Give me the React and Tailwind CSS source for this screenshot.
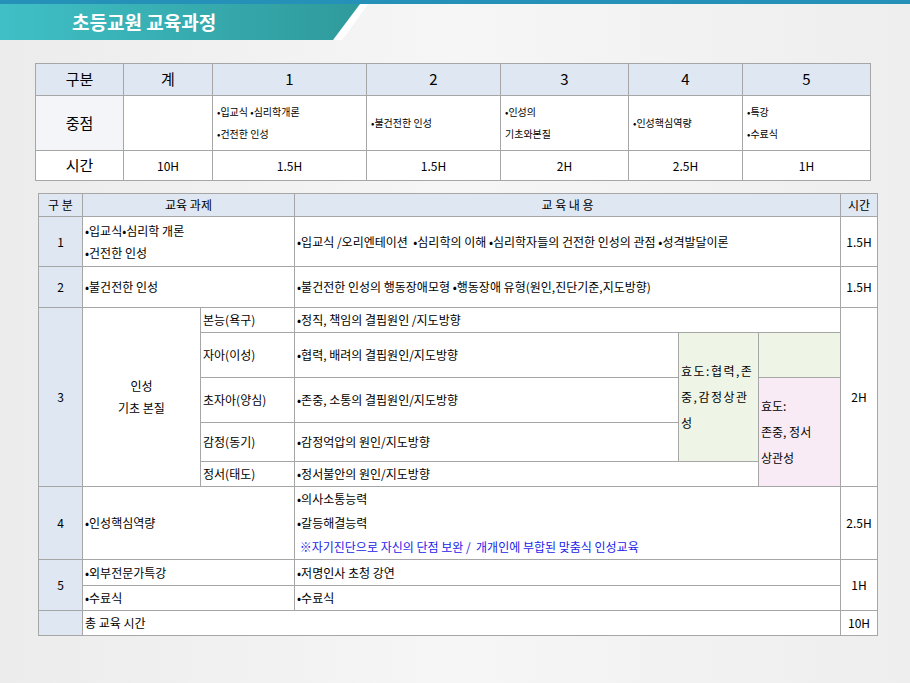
export default function App() {
  const f = { fontFamily: '"Noto Sans CJK KR", "Liberation Sans", sans-serif' };
  const b = "border border-[#a6a6a6]";
  const c = `${b} px-[2px] align-middle`;
  const blue = "bg-[#dfe7f3]";
  return (
    <div className="w-[910px] h-[683px] bg-gradient-to-r from-[#ececec] via-[#f6f6f6] to-[#eeeeee] relative overflow-hidden" style={f}>
      <div className="h-[4px] bg-[#2590b8]" />
      <div className="flex h-[36px]">
        <div className="w-[368px] h-[36px] bg-white [clip-path:polygon(0_0,100%_0,93%_100%,0_100%)] flex">
          <div className="w-[360px] h-[36px] bg-gradient-to-r from-[#3fc0c6] to-[#2f9a9c] [clip-path:polygon(0_0,100%_0,92.5%_100%,0_100%)] flex items-center pl-[72px] text-white text-[19px] font-bold">
            초등교원 교육과정
          </div>
        </div>
      </div>
      <div className="px-[35px] pt-[23px]">
        <table className="w-[835px] border-collapse text-black table-fixed bg-white font-normal">
          <colgroup>
            <col className="w-[88px]" /><col className="w-[89px]" /><col className="w-[154px]" /><col className="w-[134px]" /><col className="w-[128px]" /><col className="w-[114px]" /><col className="w-[128px]" />
          </colgroup>
          <tbody>
            <tr className={`h-[32px] ${blue} text-[15px] text-center`}>
              {["구분", "계", "1", "2", "3", "4", "5"].map((t) => <td key={t} className={b}>{t}</td>)}
            </tr>
            <tr className="h-[55px] text-[10px] leading-[22px]">
              <td className={`${b} text-center text-[15px] bg-[#f3f5f8]`}>중점</td>
              <td className={b}></td>
              <td className={`${c} px-[4px]`}>•입교식 •심리학개론<br />•건전한 인성</td>
              <td className={`${c} px-[4px]`}>•불건전한 인성</td>
              <td className={`${c} px-[4px]`}>•인성의<br />기초와본질</td>
              <td className={`${c} px-[4px]`}>•인성핵심역량</td>
              <td className={`${c} px-[4px]`}>•특강<br />•수료식</td>
            </tr>
            <tr className="h-[30px] text-[12px] text-center">
              <td className={`${b} text-[15px]`}>시간</td>
              {["10H", "1.5H", "1.5H", "2H", "2.5H", "1H"].map((t, i) => <td key={i} className={b}>{t}</td>)}
            </tr>
          </tbody>
        </table>
      </div>
      <div className="pl-[38px] pt-[12px]">
        <table className="w-[839px] border-collapse table-fixed text-[12px] bg-white text-black">
          <colgroup>
            <col className="w-[44px]" /><col className="w-[118px]" /><col className="w-[94px]" /><col className="w-[384px]" /><col className="w-[80px]" /><col className="w-[82px]" /><col className="w-[37px]" />
          </colgroup>
          <tbody>
            <tr className={`h-[23px] ${blue} text-center`}>
              <td className={b}>구 분</td>
              <td className={b} colSpan={2}>교육 과제</td>
              <td className={b} colSpan={3}>교 육 내 용</td>
              <td className={b}>시간</td>
            </tr>
            <tr className="h-[50px] leading-[22px]">
              <td className={`${b} ${blue} text-center`}>1</td>
              <td className={c} colSpan={2}>•입교식•심리학 개론<br />•건전한 인성</td>
              <td className={c} colSpan={3}>•입교식 /오리엔테이션 &nbsp;•심리학의 이해 •심리학자들의 건전한 인성의 관점 •성격발달이론</td>
              <td className={`${b} text-center`}>1.5H</td>
            </tr>
            <tr className="h-[41px]">
              <td className={`${b} ${blue} text-center`}>2</td>
              <td className={c} colSpan={2}>•불건전한 인성</td>
              <td className={c} colSpan={3}>•불건전한 인성의 행동장애모형 •행동장애 유형(원인,진단기준,지도방향)</td>
              <td className={`${b} text-center`}>1.5H</td>
            </tr>
            <tr className="h-[25px]">
              <td className={`${b} ${blue} text-center`} rowSpan={5}>3</td>
              <td className={`${b} text-center leading-[22px]`} rowSpan={5}>인성<br />기초 본질</td>
              <td className={c}>본능(욕구)</td>
              <td className={c} colSpan={3}>•정직, 책임의 결핍원인 /지도방향</td>
              <td className={`${b} text-center`} rowSpan={5}>2H</td>
            </tr>
            <tr className="h-[45px]">
              <td className={c}>자아(이성)</td>
              <td className={c}>•협력, 배려의 결핍원인/지도방향</td>
              <td className={`${c} bg-[#eef4e6] leading-[26px] tracking-[1.5px]`} rowSpan={3}>효도:협력,존중,감정상관성</td>
              <td className={`${b} bg-[#eef4e6]`}></td>
            </tr>
            <tr className="h-[45px]">
              <td className={c}>초자아(양심)</td>
              <td className={c}>•존중, 소통의 결핍원인/지도방향</td>
              <td className={`${c} bg-[#f8ebf5] leading-[26px]`} rowSpan={3}>효도:<br />존중, 정서<br />상관성</td>
            </tr>
            <tr className="h-[39px]">
              <td className={c}>감정(동기)</td>
              <td className={c}>•감정억압의 원인/지도방향</td>
            </tr>
            <tr className="h-[25px]">
              <td className={c}>정서(태도)</td>
              <td className={c} colSpan={2}>•정서불안의 원인/지도방향</td>
            </tr>
            <tr className="h-[73px] leading-[24px]">
              <td className={`${b} ${blue} text-center`}>4</td>
              <td className={c} colSpan={2}>•인성핵심역량</td>
              <td className={c} colSpan={3}>•의사소통능력<br />•갈등해결능력<br /><span className="text-[#2323e8]">&nbsp;※자기진단으로 자신의 단점 보완 / &nbsp;개개인에 부합된 맞춤식 인성교육</span></td>
              <td className={`${b} text-center`}>2.5H</td>
            </tr>
            <tr className="h-[26px]">
              <td className={`${b} ${blue} text-center`} rowSpan={2}>5</td>
              <td className={c} colSpan={2}>•외부전문가특강</td>
              <td className={c} colSpan={3}>•저명인사 초청 강연</td>
              <td className={`${b} text-center`} rowSpan={2}>1H</td>
            </tr>
            <tr className="h-[25px]">
              <td className={c} colSpan={2}>•수료식</td>
              <td className={c} colSpan={3}>•수료식</td>
            </tr>
            <tr className="h-[25px]">
              <td className={`${b} ${blue}`}></td>
              <td className={c} colSpan={5}>총 교육 시간</td>
              <td className={`${b} text-center`}>10H</td>
            </tr>
          </tbody>
        </table>
      </div>
    </div>
  );
}
